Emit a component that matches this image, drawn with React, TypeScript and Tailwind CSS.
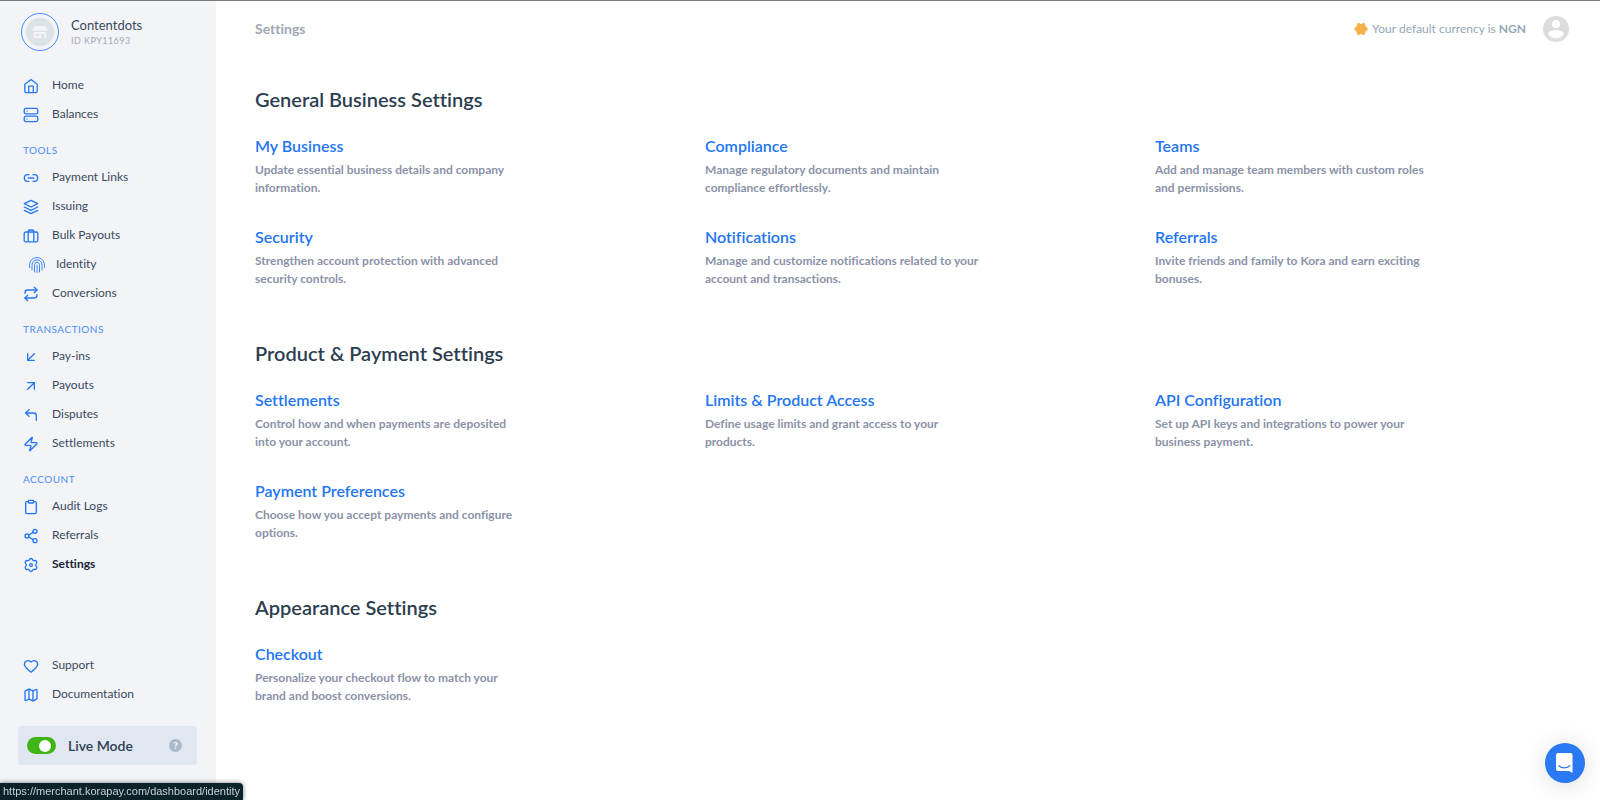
import React from 'react';
import { Link2, Repeat, ArrowDownLeft, ArrowUpRight, CornerUpLeft, Zap, Clipboard, Share2, Heart, Map } from 'lucide-react';

interface NavItem {
  label: string;
  icon: React.ReactNode;
  active?: boolean;
  indent?: boolean;
}

interface NavGroup {
  title?: string;
  items: NavItem[];
}

interface Setting {
  title: string;
  description: string;
}

const HomeIcon = () => (
  <svg className="h-4 w-4" viewBox="0 0 16 16" fill="none" stroke="currentColor" strokeWidth={1.3} strokeLinejoin="round">
    <path d="M1.8 6.2 8 1.4l6.2 4.8v6.9a1.6 1.6 0 0 1-1.6 1.6H3.4a1.6 1.6 0 0 1-1.6-1.6z" />
    <path d="M5.7 14.6V8.2h4.6v6.4" />
  </svg>
);

const BalancesIcon = () => (
  <svg className="h-4 w-4" viewBox="0 0 16 16" fill="none" stroke="currentColor" strokeWidth={1.3} strokeLinecap="round">
    <rect x="1.2" y="1.4" width="13.6" height="5.4" rx="1.8" />
    <rect x="1.2" y="9.2" width="13.6" height="5.4" rx="1.8" />
    <path d="M4 4.1h.1M4 11.9h.1" />
  </svg>
);

const LayersIcon = () => (
  <svg className="h-4 w-4" viewBox="0 0 24 24" fill="none" stroke="currentColor" strokeWidth={2} strokeLinecap="round" strokeLinejoin="round">
    <path d="M12 2 2 7l10 5 10-5z" />
    <path d="m2 17 10 5 10-5" />
    <path d="m2 12 10 5 10-5" />
  </svg>
);

const CaseIcon = () => (
  <svg className="h-4 w-4" viewBox="0 0 16 16" fill="none" stroke="currentColor" strokeWidth={1.3} strokeLinejoin="round">
    <rect x="1.2" y="4" width="13.6" height="9.8" rx="1.6" />
    <path d="M5.2 13.8V3.4A1.4 1.4 0 0 1 6.6 2h2.8a1.4 1.4 0 0 1 1.4 1.4v10.4" />
  </svg>
);

const FingerprintIcon = () => (
  <svg className="h-4 w-4" viewBox="0 0 16 16" fill="none" stroke="currentColor" strokeWidth={0.9} strokeLinecap="round">
    <path d="M.6 10.5C-.2 4.600 3 .6 8 .6s8.200 4 7.400 9.900" />
    <path d="M3 13V8.400c0-3.400 2-5.500 5-5.500s5 2.100 5 5.500V13" />
    <path d="M5.500 15V8.500c0-2 .9-3.200 2.500-3.200s2.500 1.200 2.500 3.200V15" />
    <path d="M8 8.200v7.200" />
  </svg>
);

const GearIcon = () => (
  <svg className="h-4 w-4" viewBox="0 0 16 16" fill="none" stroke="currentColor" strokeWidth={1.3} strokeLinejoin="round">
    <path d="M8 1.500c1 0 1.500.5 1.700 1.300.2.700.8 1 1.500.8 1-.3 1.800 0 2.300.8s.4 1.600-.2 2.200c-.9.9-.9 1.900 0 2.800.6.6.7 1.400.2 2.200s-1.300 1.100-2.300.8c-.7-.2-1.300.1-1.500.8-.2.8-.7 1.300-1.700 1.300s-1.500-.5-1.700-1.300c-.2-.7-.8-1-1.500-.8-1 .3-1.800 0-2.300-.8s-.4-1.600.2-2.200c.9-.9.9-1.900 0-2.800-.6-.6-.7-1.400-.2-2.200s1.300-1.100 2.300-.8c.7.2 1.300-.1 1.500-.8C6.500 2 7 1.500 8 1.500z" />
    <circle cx="8" cy="8" r="1.4" />
  </svg>
);

const StoreIcon = () => (
  <svg className="h-4 w-4" viewBox="0 0 16 16" fill="currentColor">
    <path d="M2.500 2h11l1.700 3.600a1.600 1.600 0 0 1-3 .6 1.600 1.600 0 0 1-2.800 0 1.600 1.600 0 0 1-2.800 0 1.600 1.600 0 0 1-2.800 0 1.600 1.600 0 0 1-3-.6z" />
    <path fillRule="evenodd" d="M1.800 8h12.400v6.200h-2V9.800H9.400v4.400H1.800zm1.800 1.800v2.400h3.600V9.800z" />
  </svg>
);

const navGroups: NavGroup[] = [
  {
    items: [
      { label: 'Home', icon: <HomeIcon /> },
      { label: 'Balances', icon: <BalancesIcon /> },
    ],
  },
  {
    title: 'TOOLS',
    items: [
      { label: 'Payment Links', icon: <Link2 size={16} /> },
      { label: 'Issuing', icon: <LayersIcon /> },
      { label: 'Bulk Payouts', icon: <CaseIcon /> },
      { label: 'Identity', icon: <FingerprintIcon />, indent: true },
      { label: 'Conversions', icon: <Repeat size={16} /> },
    ],
  },
  {
    title: 'TRANSACTIONS',
    items: [
      { label: 'Pay-ins', icon: <ArrowDownLeft size={16} /> },
      { label: 'Payouts', icon: <ArrowUpRight size={16} /> },
      { label: 'Disputes', icon: <CornerUpLeft size={16} /> },
      { label: 'Settlements', icon: <Zap size={16} /> },
    ],
  },
  {
    title: 'ACCOUNT',
    items: [
      { label: 'Audit Logs', icon: <Clipboard size={16} /> },
      { label: 'Referrals', icon: <Share2 size={16} /> },
      { label: 'Settings', icon: <GearIcon />, active: true },
    ],
  },
];

const helpItems: NavItem[] = [
  { label: 'Support', icon: <Heart size={16} /> },
  { label: 'Documentation', icon: <Map size={16} /> },
];

const sections: { title: string; settings: Setting[] }[] = [
  {
    title: 'General Business Settings',
    settings: [
      { title: 'My Business', description: 'Update essential business details and company\ninformation.' },
      { title: 'Compliance', description: 'Manage regulatory documents and maintain\ncompliance effortlessly.' },
      { title: 'Teams', description: 'Add and manage team members with custom roles\nand permissions.' },
      { title: 'Security', description: 'Strengthen account protection with advanced\nsecurity controls.' },
      { title: 'Notifications', description: 'Manage and customize notifications related to your\naccount and transactions.' },
      { title: 'Referrals', description: 'Invite friends and family to Kora and earn exciting\nbonuses.' },
    ],
  },
  {
    title: 'Product & Payment Settings',
    settings: [
      { title: 'Settlements', description: 'Control how and when payments are deposited\ninto your account.' },
      { title: 'Limits & Product Access', description: 'Define usage limits and grant access to your\nproducts.' },
      { title: 'API Configuration', description: 'Set up API keys and integrations to power your\nbusiness payment.' },
      { title: 'Payment Preferences', description: 'Choose how you accept payments and configure\noptions.' },
    ],
  },
  {
    title: 'Appearance Settings',
    settings: [
      { title: 'Checkout', description: 'Personalize your checkout flow to match your\nbrand and boost conversions.' },
    ],
  },
];

const NavLink: React.FC<{ item: NavItem }> = ({ item }) => (
  <a
    href="#"
    className={`flex h-[29px] items-center text-xs ${item.indent ? 'gap-[11px] pl-[29px]' : 'gap-[13px] pl-[23px]'} ${
      item.active ? 'font-bold text-[#122434]' : 'text-[#3a4a5c]'
    }`}
  >
    <span className="pt-0.5 text-[#2376f3]">{item.icon}</span>
    {item.label}
  </a>
);

const Sidebar: React.FC = () => (
  <aside className="flex w-[216px] shrink-0 flex-col bg-[#f3f4f8]">
    <div className="flex items-center gap-3 pt-3 pl-[21px]">
      <div className="flex h-[38px] w-[38px] items-center justify-center rounded-full border border-[#4a8df6]">
        <div className="flex h-7 w-7 items-center justify-center rounded-full bg-[#dde2e7] text-[#f3f5f8]">
          <StoreIcon />
        </div>
      </div>
      <div className="pt-0.5">
        <p className="text-[13px] leading-4 text-[#3a4a5c]">Contentdots</p>
        <p className="text-[9px] leading-4 tracking-wider text-[#a3a9b3]">ID KPY11693</p>
      </div>
    </div>

    <nav className="pt-[19px]">
      {navGroups.map((group, index) => (
        <div key={index}>
          {group.title && (
            <h3 className="pt-[13px] pb-[3px] pl-[23px] text-[10px] leading-[18px] tracking-wider text-[#4a8df6]">{group.title}</h3>
          )}
          {group.items.map((item) => (
            <NavLink key={item.label} item={item} />
          ))}
        </div>
      ))}
    </nav>

    <div className="mt-auto pb-[35px]">
      {helpItems.map((item) => (
        <NavLink key={item.label} item={item} />
      ))}
      <div className="mr-[19px] ml-[18px] mt-[18px] flex h-[39px] items-center rounded-sm bg-[#e0e7f0] pr-[15px] pl-[9px]">
        <label className="flex grow cursor-pointer items-center gap-3 text-sm font-semibold text-[#2c3e50]">
          <input type="checkbox" defaultChecked className="peer sr-only" />
          <span className="flex h-[17px] w-[29px] items-center justify-end rounded-full bg-[#3fb516] px-[5px]">
            <span className="h-3 w-3 rounded-full bg-white" />
          </span>
          Live Mode
        </label>
        <button type="button" aria-label="About live mode" className="h-[13px] w-[13px] rounded-full bg-[#a9bacb] text-[10px] leading-[13px] font-bold text-white">
          ?
        </button>
      </div>
    </div>
  </aside>
);

const Header: React.FC = () => (
  <header className="flex h-14 items-center justify-between">
    <h1 className="text-sm font-bold text-[#a1a8b3]">Settings</h1>
    <div className="flex items-center">
      <svg className="mr-1 h-3.5 w-3.5" viewBox="0 0 14 14" fill="#f8b14a" stroke="#f8b14a" strokeWidth={1.2} strokeLinejoin="round">
        <path d="M4 1.300 7 2.800l3-1.500.8 3L13.300 7l-2.500 2.700-.8 3-3-1.500-3 1.500-.8-3L.7 7l2.500-2.700z" />
      </svg>
      <p className="text-xs text-[#94a7b7]">
        Your default currency is <strong>NGN</strong>
      </p>
      <button type="button" aria-label="Profile" className="ml-[17px]">
        <svg className="h-[26px] w-[26px]" viewBox="0 0 26 26">
          <circle cx="13" cy="13" r="13" fill="#dddddd" />
          <circle cx="13" cy="8" r="4" fill="#fff" />
          <path d="M5.200 18.200c.2-3 5.200-4.200 7.800-4.200s7.600 1.200 7.800 4.200c-1.700 2.600-4.600 4.200-7.800 4.200s-6.100-1.600-7.800-4.200z" fill="#fff" />
        </svg>
      </button>
    </div>
  </header>
);

const App: React.FC = () => {
  return (
    <div className="flex min-h-screen border-t border-[#77797c] bg-white font-['Lato',sans-serif] [font-variant-ligatures:none]">
      <Sidebar />

      <main className="grow pr-[31px] pl-[39px]">
        <Header />
        <div className="flex flex-col gap-[51px] pt-7">
          {sections.map((section) => (
            <section key={section.title}>
              <h2 className="mb-[21px] text-xl leading-7 font-semibold text-[#2c3e50]">{section.title}</h2>
              <div className="grid grid-cols-3 gap-x-9 gap-y-7">
                {section.settings.map((setting) => (
                  <div key={setting.title}>
                    <a href="#" className="text-base leading-6 font-semibold text-[#2376f3]">{setting.title}</a>
                    <p className="mt-[3px] text-xs leading-[18px] font-bold whitespace-pre-line text-[#8b92a8]">{setting.description}</p>
                  </div>
                ))}
              </div>
            </section>
          ))}
        </div>
      </main>

      <button type="button" aria-label="Open chat" className="fixed right-[15px] bottom-[17px] flex h-10 w-10 items-center justify-center rounded-full bg-[#2a78f2] shadow-[0_2px_24px_rgba(0,0,0,0.14)]">
        <svg className="h-5 w-5" viewBox="0 0 20 20">
          <path d="M3 0h12.500A2 2 0 0 1 17.500 2v18l-3.500-2H3a2 2 0 0 1-2-2V2a2 2 0 0 1 2-2z" fill="#fff" />
          <path d="M3.800 12.700c3.300 2.900 7.800 2.900 11 0" fill="none" stroke="#2a78f2" strokeWidth={1.2} strokeLinecap="round" />
        </svg>
      </button>

      {/* link preview at the bottom of the window */}
      <div className="fixed bottom-0 left-0 rounded-tr-sm bg-[#0a2229] px-[3px] font-['Liberation_Sans',sans-serif] text-[11px] leading-[17px] text-[#c3d3d6] shadow-[0_0_5px_rgba(0,0,0,0.5)]">
        https://merchant.korapay.com/dashboard/identity
      </div>
    </div>
  );
};

export default App;
